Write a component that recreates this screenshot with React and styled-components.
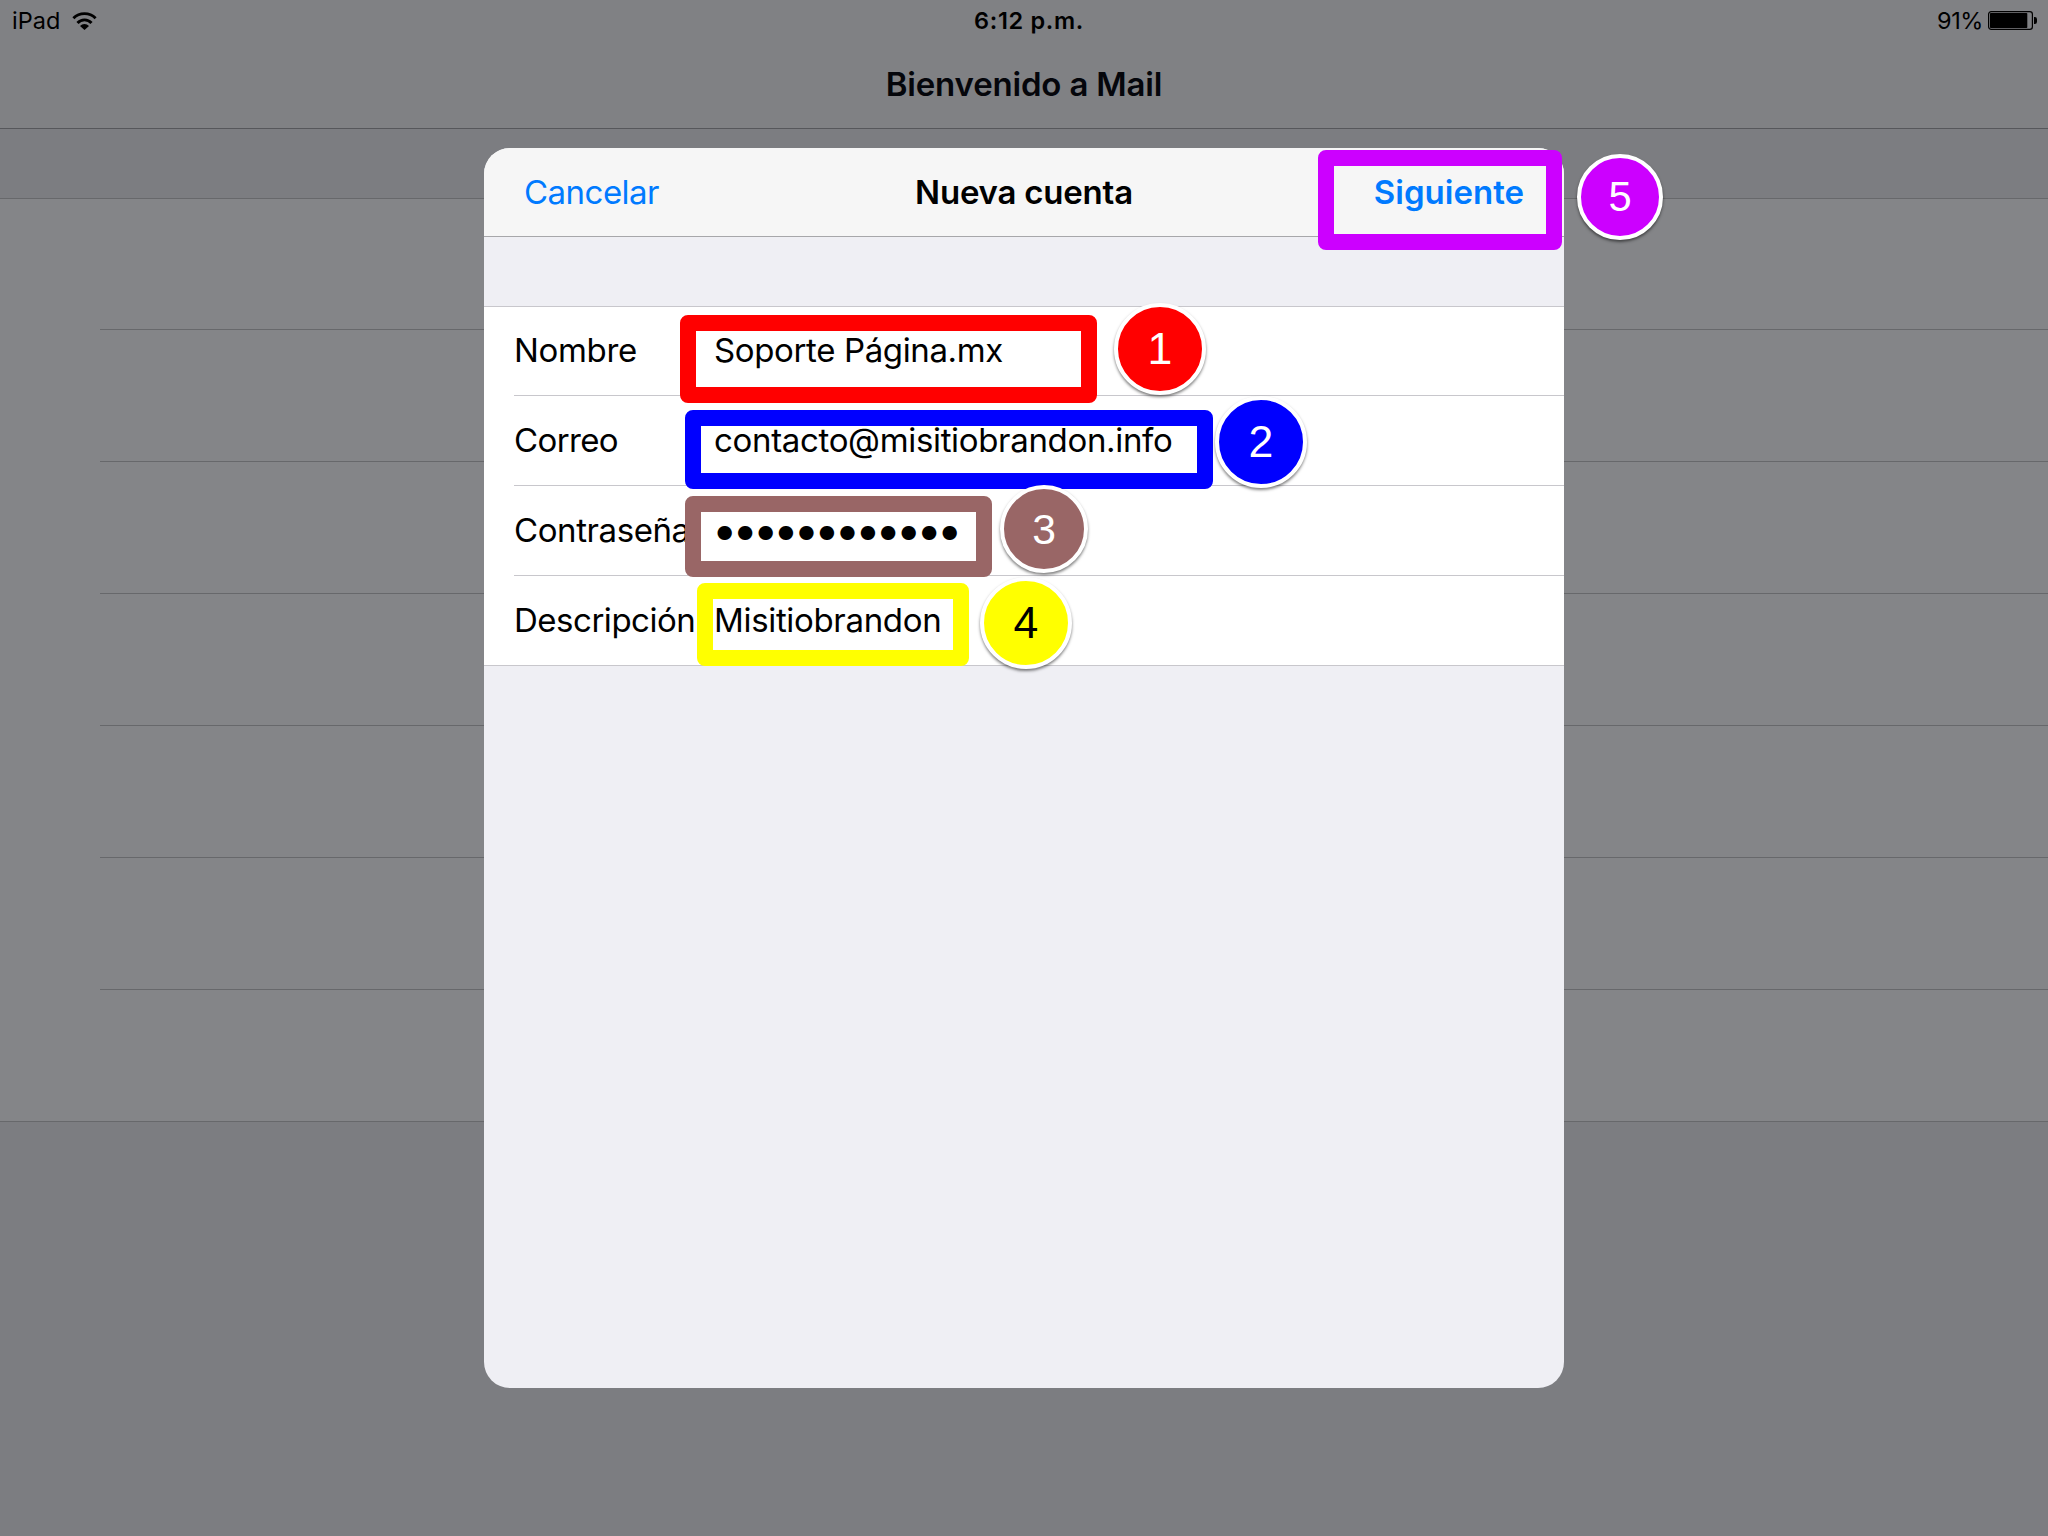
import React from 'react';
import styled, { createGlobalStyle } from 'styled-components';

const fields = [
  { label: 'Nombre', labelSpacing: -0.33, value: 'Soporte Página.mx', spacing: -0.37 },
  { label: 'Correo', labelSpacing: -0.62, value: 'contacto@misitiobrandon.info', spacing: -0.33 },
  { label: 'Contraseña', labelSpacing: -0.41, value: '●●●●●●●●●●●●', isSecret: true },
  { label: 'Descripción', labelSpacing: -0.48, value: 'Misitiobrandon', spacing: -0.33 },
];

const marks = [
  { left: 680, top: 315, width: 417, height: 88, color: '#ff0000' },
  { left: 685, top: 410, width: 528, height: 79, color: '#0000ff' },
  { left: 685, top: 496, width: 307, height: 81, color: '#996666' },
  { left: 697, top: 583, width: 272, height: 83, color: '#ffff00' },
  { left: 1318, top: 150, width: 244, height: 100, color: '#cc00ff' },
];

const steps = [
  { number: 1, left: 1114, top: 303, size: 92, color: '#ff0000' },
  { number: 2, left: 1215, top: 396, size: 92, color: '#0000ff' },
  { number: 3, left: 1000, top: 485, size: 88, color: '#996666' },
  { number: 4, left: 980, top: 577, size: 92, color: '#ffff00', ink: '#000' },
  { number: 5, left: 1577, top: 154, size: 86, color: '#cc00ff' },
];

function WifiIcon() {
  return (
    <svg width="26" height="18" viewBox="0 0 26 18" fill="none">
      <path d="M1.4 6.2A15.7 15.7 0 0 1 23.6 6.2" stroke="#000" strokeWidth="2.9" />
      <path d="M5.5 11A9.4 9.4 0 0 1 19.5 11" stroke="#000" strokeWidth="2.9" />
      <path d="M12.5 18L8 13.9A6.2 6.2 0 0 1 17 13.9Z" fill="#000" />
    </svg>
  );
}

function BatteryIcon() {
  return (
    <svg width="49" height="19" viewBox="0 0 49 19" fill="none">
      <rect x="0.6" y="0.6" width="43.8" height="17.8" rx="2.6" stroke="#000" strokeWidth="1.2" />
      <rect x="2" y="2" width="37.3" height="15" rx="0.8" fill="#000" />
      <path d="M46 6h0.8a2.2 2.2 0 0 1 2.2 2.2v2.6a2.2 2.2 0 0 1-2.2 2.2H46z" fill="#000" />
    </svg>
  );
}

export default function App() {
  return (
    <>
      <GlobalStyle />
      <Screen>
        <TopBar>
          <StatusBar>
            <StatusSide>
              <span>iPad</span>
              <WifiIcon />
            </StatusSide>
            <Clock>6:12 p.m.</Clock>
            <StatusSide isRight>
              <Percent>91%</Percent>
              <BatteryIcon />
            </StatusSide>
          </StatusBar>
          <PageTitle>Bienvenido a Mail</PageTitle>
        </TopBar>
        <Providers>
          {[1, 2, 3, 4, 5, 6, 7].map((n) => <Provider key={n} />)}
        </Providers>
        <Modal>
          <ModalHeader>
            <Action spacing={-0.52}>Cancelar</Action>
            <ModalTitle>Nueva cuenta</ModalTitle>
            <Action isPrimary spacing={0}>Siguiente</Action>
          </ModalHeader>
          <Form>
            {fields.map((field) => (
              <Field key={field.label}>
                <Label spacing={field.labelSpacing}>{field.label}</Label>
                {field.isSecret
                  ? <Secret>{field.value}</Secret>
                  : <Value spacing={field.spacing}>{field.value}</Value>}
              </Field>
            ))}
          </Form>
        </Modal>
        {marks.map((mark) => <Mark key={mark.color} {...mark} />)}
        {steps.map(({ number, ...step }) => <Step key={number} {...step}>{number}</Step>)}
      </Screen>
    </>
  );
}

const GlobalStyle = createGlobalStyle`
  * {
    box-sizing: border-box;
  }
  body {
    margin: 0;
  }
`;

const plain = {
  shouldForwardProp: (prop) => ![
    'isRight', 'isPrimary', 'spacing', 'left', 'top', 'width', 'height', 'size', 'color', 'ink',
  ].includes(prop),
};

const Screen = styled.div`
  position: relative;
  width: 2048px;
  height: 1536px;
  overflow: hidden;
  background: #7c7d81;
  color: #000;
  font-family: Inter, 'Liberation Sans', sans-serif;
  font-size: 33px;
  white-space: nowrap;
`;

const TopBar = styled.header`
  height: 129px;
  background: #808184;
  border-bottom: 1px solid #56575b;
`;

const StatusBar = styled.div`
  display: grid;
  grid-template-columns: 1fr auto 1fr;
  align-items: center;
  height: 41px;
  padding: 0 11px 0 12px;
  font-size: 23.5px;
  line-height: 29px;
`;

const StatusSide = styled.div.withConfig(plain)`
  display: flex;
  align-items: center;
  justify-content: ${(props) => (props.isRight ? 'flex-end' : 'flex-start')};
  gap: ${(props) => (props.isRight ? '5px' : '12px')};
`;

const Clock = styled.span`
  margin-left: 9px;
  font-weight: 600;
  letter-spacing: 0.67px;
`;

const Percent = styled.span`
  letter-spacing: -0.4px;
`;

const PageTitle = styled.h1`
  margin: 0;
  color: #05060b;
  font-size: 33px;
  font-weight: 600;
  line-height: 86px;
  letter-spacing: -0.18px;
  text-align: center;
`;

const Providers = styled.div`
  margin-top: 69px;
  padding-left: 100px;
  background: #848588;
  border-top: 1px solid #67686b;
  border-bottom: 1px solid #67686b;
`;

const Provider = styled.div`
  height: 132px;
  border-bottom: 1px solid #67686b;

  &:first-child {
    height: 131px;
  }
  &:last-child {
    height: 131px;
    border-bottom: none;
  }
`;

const Modal = styled.section`
  position: absolute;
  left: 484px;
  top: 148px;
  width: 1080px;
  height: 1240px;
  border-radius: 26px;
  overflow: hidden;
  background: #efeff4;
`;

const ModalHeader = styled.div`
  display: grid;
  grid-template-columns: 1fr auto 1fr;
  align-items: center;
  height: 89px;
  padding: 0 40px;
  background: #f6f6f6;
  border-bottom: 1px solid #a7a7aa;
`;

const ModalTitle = styled.h2`
  margin: 0;
  font-size: 33px;
  font-weight: 600;
  letter-spacing: -0.22px;
`;

const Action = styled.span.withConfig(plain)`
  justify-self: ${(props) => (props.isPrimary ? 'end' : 'start')};
  color: #007aff;
  font-weight: ${(props) => (props.isPrimary ? 600 : 400)};
  letter-spacing: ${(props) => props.spacing}px;
`;

const Form = styled.div`
  margin-top: 69px;
  padding-left: 30px;
  background: #fff;
  border-top: 1px solid #c8c7cc;
  border-bottom: 1px solid #c8c7cc;
`;

const Field = styled.div`
  display: grid;
  grid-template-columns: 200px 1fr;
  align-items: center;
  height: 90px;
  padding-bottom: 1px;
  border-bottom: 1px solid #c8c7cc;

  &:first-child {
    height: 89px;
    padding-bottom: 2px;
  }
  &:last-child {
    height: 89px;
    border-bottom: none;
  }
`;

const Label = styled.span.withConfig(plain)`
  letter-spacing: ${(props) => props.spacing}px;
`;

const Value = styled(Label)``;

const Secret = styled.span`
  padding: 7px 0 0 2px;
  font-size: 19px;
  line-height: 24px;
  letter-spacing: 3.08px;
`;

const Mark = styled.div.withConfig(plain)`
  position: absolute;
  left: ${(props) => props.left}px;
  top: ${(props) => props.top}px;
  width: ${(props) => props.width}px;
  height: ${(props) => props.height}px;
  border: 16px solid ${(props) => props.color};
  border-radius: 8px;
`;

const Step = styled.div.withConfig(plain)`
  position: absolute;
  left: ${(props) => props.left}px;
  top: ${(props) => props.top}px;
  width: ${(props) => props.size}px;
  height: ${(props) => props.size}px;
  display: flex;
  align-items: center;
  justify-content: center;
  border: 4px solid #fff;
  border-radius: 50%;
  background: ${(props) => props.color};
  box-shadow: 0 2px 3px rgba(0, 0, 0, 0.5);
  color: ${(props) => props.ink || '#fff'};
  font-family: 'Liberation Sans', Arial, sans-serif;
  font-size: ${(props) => props.size * 0.485}px;
`;
